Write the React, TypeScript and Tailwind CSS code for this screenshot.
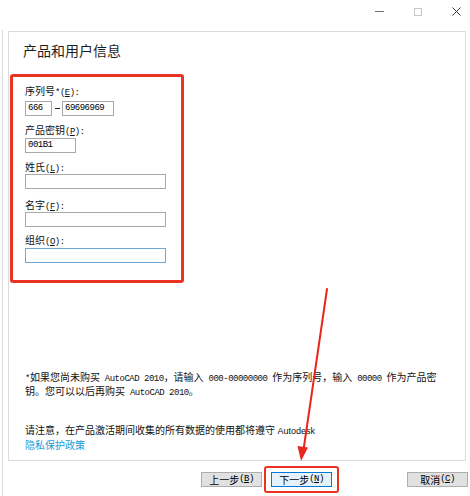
import type { ReactNode } from "react";

// half-width latin like SimSun
const M = ({ children }: { children: ReactNode }) => (
  <span className="font-['Liberation_Mono',monospace] text-[9px] tracking-[-0.5px]">{children}</span>
);

const K = ({ children }: { children: ReactNode }) => (
  <span className="underline underline-offset-1 decoration-[0.5px]">{children}</span>
);

const Label = ({ children, className = "" }: { children: ReactNode; className?: string }) => (
  <div className={`h-[14px] leading-[14px] text-[10px] text-[#111] whitespace-nowrap ${className}`}>{children}</div>
);

const Field = ({ w, value, focus, className = "" }: { w: string; value?: string; focus?: boolean; className?: string }) => (
  <div
    className={`h-[15px] border bg-white px-[2px] flex items-center leading-[11px] ${w} ${
      focus ? "border-[#6fa9d8]" : "border-[#a9a9a9]"
    } ${className}`}
  >
    {value && <M>{value}</M>}
  </div>
);

const Btn = ({ children, primary }: { children: ReactNode; primary?: boolean }) => (
  <div
    className={`w-[61px] h-[15px] flex items-center justify-center text-[10px] leading-[13px] text-black border ${
      primary ? "bg-[#e5f1fb] border-[#0078d7]" : "bg-[#e1e1e1] border-[#adadad]"
    }`}
  >
    {children}
  </div>
);

export default function App() {
  return (
    <div className="relative w-[470px] h-[496px] bg-white overflow-hidden flex font-['Noto_Sans_CJK_SC',sans-serif]">
      {/* window edge */}
      <div className="ml-[2px] mt-[30px] w-px bg-[#dadada]" />

      <div className="ml-[5px] w-[458px] flex flex-col">
        {/* title bar */}
        <div className="h-[31px] flex items-start justify-end pt-[7px] pr-[5px]">
          <div className="w-[9px] h-[9px] flex items-center justify-center">
            <div className="w-[9px] h-px bg-[#707070]" />
          </div>
          <div className="ml-[29px] w-[9px] h-[9px] flex items-center justify-center">
            <div className="w-[8px] h-[8px] border border-[#c6c6c6]" />
          </div>
          <svg className="ml-[30px]" width="9" height="9" viewBox="0 0 9 9">
            <path d="M0.5 0.5 L8.5 8.5 M8.5 0.5 L0.5 8.5" stroke="#3a3a3a" strokeWidth="1" />
          </svg>
        </div>

        {/* content panel */}
        <div className="h-[430px] border border-[#dcdcdc] flex flex-col">
          <div className="mt-[8px] ml-[14px] text-[14px] leading-[20px] text-[#1e1e1e]">产品和用户信息</div>

          <div className="mt-[14px] ml-px w-[174px] h-[209px] border-[3px] border-[#ea3323] rounded-[3px] pl-[12px] pt-[7px] flex flex-col">
            <Label>
              序列号<M>*(<K>E</K>):</M>
            </Label>
            <div className="mt-[3px] flex items-center">
              <Field w="w-[27px]" value="666" />
              <div className="w-[10px] flex justify-center">
                <div className="w-[5px] h-px bg-[#222]" />
              </div>
              <Field w="w-[52px]" value="69696969" />
            </div>
            <Label className="mt-[7px]">
              产品密钥<M>(<K>P</K>):</M>
            </Label>
            <Field w="w-[51px]" value="001B1" className="mt-px" />
            <Label className="mt-[7px]">
              姓氏<M>(<K>L</K>):</M>
            </Label>
            <Field w="w-[141px]" />
            <Label className="mt-[9px]">
              名字<M>(<K>F</K>):</M>
            </Label>
            <Field w="w-[141px]" />
            <Label className="mt-[6px]">
              组织<M>(<K>O</K>):</M>
            </Label>
            <Field w="w-[141px]" focus className="mt-px" />
          </div>

          <div className="mt-[88px] ml-[16px] text-[10px] leading-[11px] text-[#111] whitespace-nowrap">
            <div>
              <M>*</M>如果您尚未购买<M> AutoCAD 2010</M>，请输入<M> 000-00000000 </M>作为序列号，输入<M> 00000 </M>作为产品密
            </div>
            <div>
              钥。您可以以后再购买<M> AutoCAD 2010</M>。
            </div>
          </div>

          <div className="mt-[24px] ml-[16px] text-[10px] leading-[13px] text-[#111] whitespace-nowrap">
            <div>
              请注意，在产品激活期间收集的所有数据的使用都将遵守
              <span className="font-['Liberation_Sans',sans-serif] text-[9px]"> Autodesk</span>
            </div>
            <div className="text-[#1e9ad6]">隐私保护政策</div>
          </div>
        </div>

        {/* buttons */}
        <div className="mt-[5px] flex items-center">
          <div className="ml-[193px]">
            <Btn>
              上一步<M>(<K>B</K>)</M>
            </Btn>
          </div>
          <div className="ml-[2px] border-2 border-[#ea3323] rounded-[3px] px-[5px] py-[4px]">
            <Btn primary>
              下一步<M>(<K>N</K>)</M>
            </Btn>
          </div>
          <div className="ml-[68px]">
            <Btn>
              取消<M>(<K>C</K>)</M>
            </Btn>
          </div>
        </div>
      </div>

      {/* annotation arrow */}
      <svg className="absolute inset-0 pointer-events-none" width="470" height="496" viewBox="0 0 470 496">
        <line x1="327" y1="289" x2="303.5" y2="450" stroke="#e8281e" strokeWidth="2" strokeLinecap="round" />
        <polygon points="301,461 308,447.5 297.5,446" fill="#e8281e" />
      </svg>
    </div>
  );
}
